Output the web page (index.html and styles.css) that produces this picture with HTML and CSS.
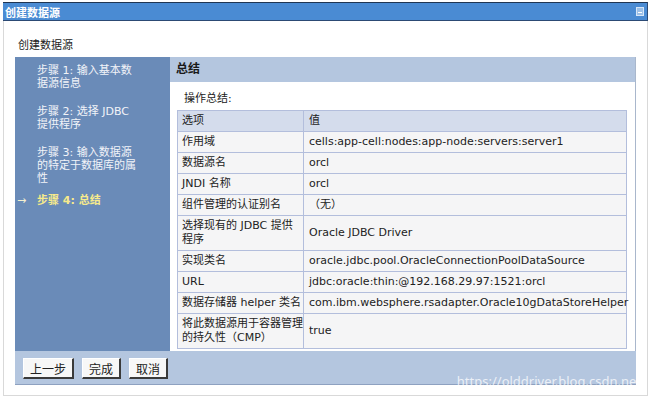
FILE: index.html
```html
<!DOCTYPE html>
<html lang="zh-CN">

<head>
  <meta charset="UTF-8">
  <title>创建数据源</title>
  <link rel="stylesheet" href="styles.css">
</head>

<body>

  <div class="window">
    <div class="titlebar">
      <span class="title">创建数据源</span>
      <span class="min"></span>
    </div>
    <div class="content">
      <h1 class="page-title">创建数据源</h1>

      <div class="wizard">
        <ul class="steps">
          <li class="step"><span class="mark"></span><span class="label">步骤 1: 输入基本数据源信息</span></li>
          <li class="step"><span class="mark"></span><span class="label">步骤 2: 选择 JDBC 提供程序</span></li>
          <li class="step"><span class="mark"></span><span class="label">步骤 3: 输入数据源的特定于数据库的属性</span></li>
          <li class="step current"><span class="mark">→</span><span class="label">步骤 4: 总结</span></li>
        </ul>

        <div class="panel">
          <div class="panel-head">总结</div>
          <div class="panel-body">
            <p class="caption">操作总结:</p>
            <table class="summary">
              <colgroup>
                <col class="key-col">
                <col>
              </colgroup>
              <tr class="head">
                <td>选项</td>
                <td>值</td>
              </tr>
              <tr>
                <td>作用域</td>
                <td>cells:app-cell:nodes:app-node:servers:server1</td>
              </tr>
              <tr>
                <td>数据源名</td>
                <td>orcl</td>
              </tr>
              <tr>
                <td>JNDI 名称</td>
                <td>orcl</td>
              </tr>
              <tr>
                <td>组件管理的认证别名</td>
                <td>（无）</td>
              </tr>
              <tr>
                <td>选择现有的 JDBC 提供程序</td>
                <td>Oracle JDBC Driver</td>
              </tr>
              <tr>
                <td>实现类名</td>
                <td>oracle.jdbc.pool.OracleConnectionPoolDataSource</td>
              </tr>
              <tr>
                <td>URL</td>
                <td>jdbc:oracle:thin:@192.168.29.97:1521:orcl</td>
              </tr>
              <tr>
                <td>数据存储器 helper 类名</td>
                <td>com.ibm.websphere.rsadapter.Oracle10gDataStoreHelper</td>
              </tr>
              <tr>
                <td>将此数据源用于容器管理的持久性（CMP）</td>
                <td>true</td>
              </tr>
            </table>
          </div>
        </div>

        <div class="buttons">
          <button class="btn">上一步</button>
          <button class="btn">完成</button>
          <button class="btn">取消</button>
        </div>
      </div>
    </div>
  </div>

  <div class="watermark">https://olddriver.blog.csdn.net</div>

</body>

</html>
```

FILE: styles.css
```css
* {
  padding: 0;
  margin: 0;
  box-sizing: border-box;
}

body {
  background: #fff;
  color: #222;
  font-family: "DejaVu Sans", "Noto Sans CJK SC", sans-serif;
  font-size: 11px;
  width: 650px;
  height: 398px;
  overflow: hidden;
  position: relative;
}

.window {
  margin: 2px 2px 0 3px;
}

/* blue title strip */
.titlebar {
  height: 19px;
  display: flex;
  align-items: center;
  justify-content: space-between;
  padding: 0 3px 0 2px;
  background: #4a8bd3;
  border-top: 1px solid #1f3552;
  border-bottom: 1px solid #2c4a74;
  border-right: 1px solid #2c4a74;
  color: #fff;
  font-weight: bold;
  font-size: 11px;
}

.min {
  width: 8px;
  height: 9px;
  background: #9cc0e8;
  border: 1px solid #d6e6f7;
  position: relative;
}

.min::after {
  content: '';
  position: absolute;
  left: 1px;
  right: 1px;
  top: 4px;
  height: 1px;
  background: #fff;
}

.content {
  border: 1px solid #d9d9d9;
  border-top: none;
  padding: 0 10px 10px 11px;
}

.page-title {
  font-size: 11px;
  font-weight: normal;
  line-height: 14px;
  padding: 18px 0 4px 3px;
  color: #222;
}

.wizard {
  display: grid;
  grid-template-columns: 155px 1fr;
  width: 621px;
}

/* left step list */
.steps {
  list-style: none;
  background: #6a8bb8;
  padding: 7px 0 0 2px;
  color: #f2f4f8;
}

.step {
  display: flex;
  line-height: 13px;
}

.step + .step {
  margin-top: 15px;
}

.step.current {
  margin-top: 9px;
  color: #f6ea8c;
  font-weight: bold;
}

.mark {
  width: 20px;
  flex: none;
  color: #f4f0d0;
  font-weight: normal;
}

.label {
  width: 102px;
}

/* right summary panel */
.panel {
  border-right: 1px solid #a9b7cc;
  background: #fff;
}

.panel-head {
  height: 25px;
  line-height: 25px;
  padding-left: 6px;
  background: #b4c6df;
  font-weight: bold;
  font-size: 12px;
  color: #1a1a1a;
}

.panel-body {
  padding: 10px 8px 2px 7px;
}

.caption {
  line-height: 14px;
  padding-left: 7px;
  margin-bottom: 4px;
}

.summary {
  width: 450px;
  table-layout: fixed;
  border-collapse: collapse;
  border: 1px solid #b3bedc;
}

.key-col {
  width: 126px;
}

.summary td {
  border: 1px solid #b3bedc;
  background: #f5f5f6;
  padding: 3px 0 3px 4px;
  line-height: 14px;
  vertical-align: middle;
  white-space: normal;
}

.summary td + td {
  padding-left: 5px;
}

.summary .head td {
  background: #d4dcec;
}

/* bottom button strip */
.buttons {
  grid-column: 1 / -1;
  display: flex;
  gap: 8px;
  height: 34px;
  padding: 7px 8px 0;
  background: #b4c6df;
  border-bottom: 1px solid #8ea1c0;
}

.btn {
  height: 21px;
  padding: 0 6px;
  font-family: "Noto Sans CJK SC", sans-serif;
  font-size: 12px;
  color: #222;
  background: #f7f7f7;
  border-top: 1px solid #fff;
  border-left: 1px solid #fff;
  border-right: 2px solid #3a3a3a;
  border-bottom: 2px solid #3a3a3a;
}

.watermark {
  position: absolute;
  right: 9px;
  bottom: 8px;
  font-family: "Noto Sans", sans-serif;
  font-size: 13px;
  color: rgba(255, 255, 255, 0.75);
}
```
